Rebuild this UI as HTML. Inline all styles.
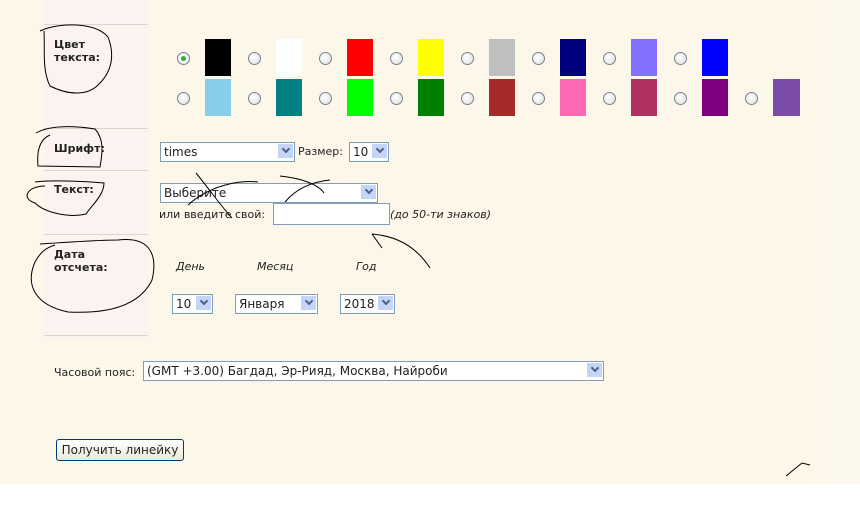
<!DOCTYPE html><html><head><meta charset="utf-8"><style>
body{margin:0;width:860px;height:525px;position:relative;background:#fff;font-family:Tahoma,"DejaVu Sans","Liberation Sans",sans-serif;font-size:11px;color:#222;overflow:hidden}
.bg{position:absolute;left:0;top:0;width:822px;height:484px;background:#fdf7ea}
.rs{position:absolute;left:822px;top:0;width:38px;height:484px;background:#fbf7ec}
.lc{position:absolute;left:44px;top:0;width:104px;height:340px;background:#fcf2ef}
.hl{position:absolute;left:44px;width:104px;height:1px;background:#ddd5cc}
.sw{position:absolute;width:26px;height:37px}
.rd{position:absolute;width:11px;height:11px;border:1px solid #7a8290;border-radius:50%;background:radial-gradient(circle at 40% 40%,#fff,#dcdcd8)}
.lb{position:absolute;font-weight:bold;font-size:11px;line-height:13px}
.sel{position:absolute;height:18px;border:1px solid #7f9db9;background:#fff;box-sizing:border-box;font-size:12px;line-height:16px;padding-left:3px}
.sel:after{content:"";position:absolute;right:1px;top:1px;width:15px;height:14px;background:#c5d5f8 }
.sel i{position:absolute;right:5px;top:3px;z-index:1;width:4px;height:4px;border-right:2px solid #4d6185;border-bottom:2px solid #4d6185;transform:rotate(45deg)}
.t{position:absolute;white-space:nowrap}
</style></head><body>
<div class="bg"></div><div class="rs"></div><div class="lc"></div>
<div class="hl" style="top:24px"></div><div class="hl" style="top:128px"></div><div class="hl" style="top:170px"></div><div class="hl" style="top:234px"></div><div class="hl" style="top:335px"></div>
<div class="lb" style="left:54px;top:38px">Цвет<br>текста:</div>
<div class="lb" style="left:54px;top:142px">Шрифт:</div>
<div class="lb" style="left:54px;top:183px">Текст:</div>
<div class="lb" style="left:54px;top:248px">Дата<br>отсчета:</div>

<div class="sw" style="left:205px;top:39px;background:#000"></div>
<div class="sw" style="left:276px;top:39px;background:#fff"></div>
<div class="sw" style="left:347px;top:39px;background:#f00"></div>
<div class="sw" style="left:418px;top:39px;background:#ff0"></div>
<div class="sw" style="left:489px;top:39px;background:#bfbfbf"></div>
<div class="sw" style="left:560px;top:39px;background:#000080"></div>
<div class="sw" style="left:631px;top:39px;background:#8470ff"></div>
<div class="sw" style="left:702px;top:39px;background:#00f"></div>
<div class="sw" style="left:205px;top:79px;background:#87ceeb"></div>
<div class="sw" style="left:276px;top:79px;background:#008080"></div>
<div class="sw" style="left:347px;top:79px;background:#0f0"></div>
<div class="sw" style="left:418px;top:79px;background:#008000"></div>
<div class="sw" style="left:489px;top:79px;background:#a52a2a"></div>
<div class="sw" style="left:560px;top:79px;background:#ff69b4"></div>
<div class="sw" style="left:631px;top:79px;background:#b03060"></div>
<div class="sw" style="left:702px;top:79px;background:#800080"></div>
<div class="sw" style="left:773px;top:79px;width:27px;background:#7b4ba8"></div>

<div class="rd" style="left:177px;top:52px;background:radial-gradient(circle,#3a3 0 2px,#fff 3px,#dcdcd8)"></div>
<div class="rd" style="left:248px;top:52px"></div><div class="rd" style="left:319px;top:52px"></div><div class="rd" style="left:390px;top:52px"></div><div class="rd" style="left:461px;top:52px"></div><div class="rd" style="left:532px;top:52px"></div><div class="rd" style="left:603px;top:52px"></div><div class="rd" style="left:674px;top:52px"></div>
<div class="rd" style="left:177px;top:92px"></div><div class="rd" style="left:248px;top:92px"></div><div class="rd" style="left:319px;top:92px"></div><div class="rd" style="left:390px;top:92px"></div><div class="rd" style="left:461px;top:92px"></div><div class="rd" style="left:532px;top:92px"></div><div class="rd" style="left:603px;top:92px"></div><div class="rd" style="left:674px;top:92px"></div><div class="rd" style="left:745px;top:92px"></div>

<div class="sel" style="left:160px;top:142px;width:135px;height:20px;line-height:18px">times<i></i></div>
<div class="t" style="left:298px;top:145px">Размер:</div>
<div class="sel" style="left:349px;top:142px;width:40px;height:20px;line-height:18px">10<i></i></div>
<div class="sel" style="left:160px;top:183px;width:218px;height:20px;line-height:18px">Выберите<i></i></div>
<div class="t" style="left:159px;top:208px">или введите свой:</div>
<div style="position:absolute;left:273px;top:203px;width:117px;height:22px;border:1px solid #7f9db9;background:#fff;box-sizing:border-box"></div>
<div class="t" style="left:390px;top:208px;font-style:italic">(до 50-ти знаков)</div>
<div class="t" style="left:176px;top:260px;font-style:italic">День</div>
<div class="t" style="left:257px;top:260px;font-style:italic">Месяц</div>
<div class="t" style="left:356px;top:260px;font-style:italic">Год</div>
<div class="sel" style="left:172px;top:294px;width:41px;height:20px;line-height:18px">10<i></i></div>
<div class="sel" style="left:235px;top:294px;width:83px;height:20px;line-height:18px">Января<i></i></div>
<div class="sel" style="left:340px;top:294px;width:55px;height:20px;line-height:18px">2018<i></i></div>
<div class="t" style="left:54px;top:366px">Часовой пояс:</div>
<div class="sel" style="left:143px;top:361px;width:461px;height:20px;line-height:18px">(GMT +3.00) Багдад, Эр-Рияд, Москва, Найроби<i></i></div>
<div style="position:absolute;left:56px;top:439px;width:128px;height:22px;border:1px solid #003c74;border-radius:3px;background:linear-gradient(#fff,#ece9d8);box-sizing:border-box;text-align:center;line-height:20px;font-size:12px">Получить линейку</div>
<svg style="position:absolute;left:0;top:0" width="860" height="525" fill="none" stroke="#000" stroke-width="1">
<path d="M40 31C60 22 95 22 108 37C115 55 112 72 98 85C88 95 70 96 50 86C42 70 45 50 44 31"/>
<path d="M36 133C48 126 70 125 95 129C105 140 102 155 100 167L38 166C37 155 38 140 50 135"/>
<path d="M35 182C50 180 80 181 104 183C104 195 92 205 86 214C70 218 45 213 35 203C20 198 28 186 45 186"/>
<path d="M40 244C70 242 100 240 118 240C150 236 158 255 152 280C140 305 110 314 68 312C35 305 25 285 35 262C40 253 45 248 55 245"/>
<path d="M196 173C210 190 220 205 232 218M188 205C210 185 240 180 258 182M280 176C300 178 318 184 324 193M285 202C295 190 310 182 330 180"/>
<path d="M372 234C395 236 415 245 430 268M372 234L382 248"/>
<path d="M786 476L802 463L810 465"/>
</svg>
</body></html>
